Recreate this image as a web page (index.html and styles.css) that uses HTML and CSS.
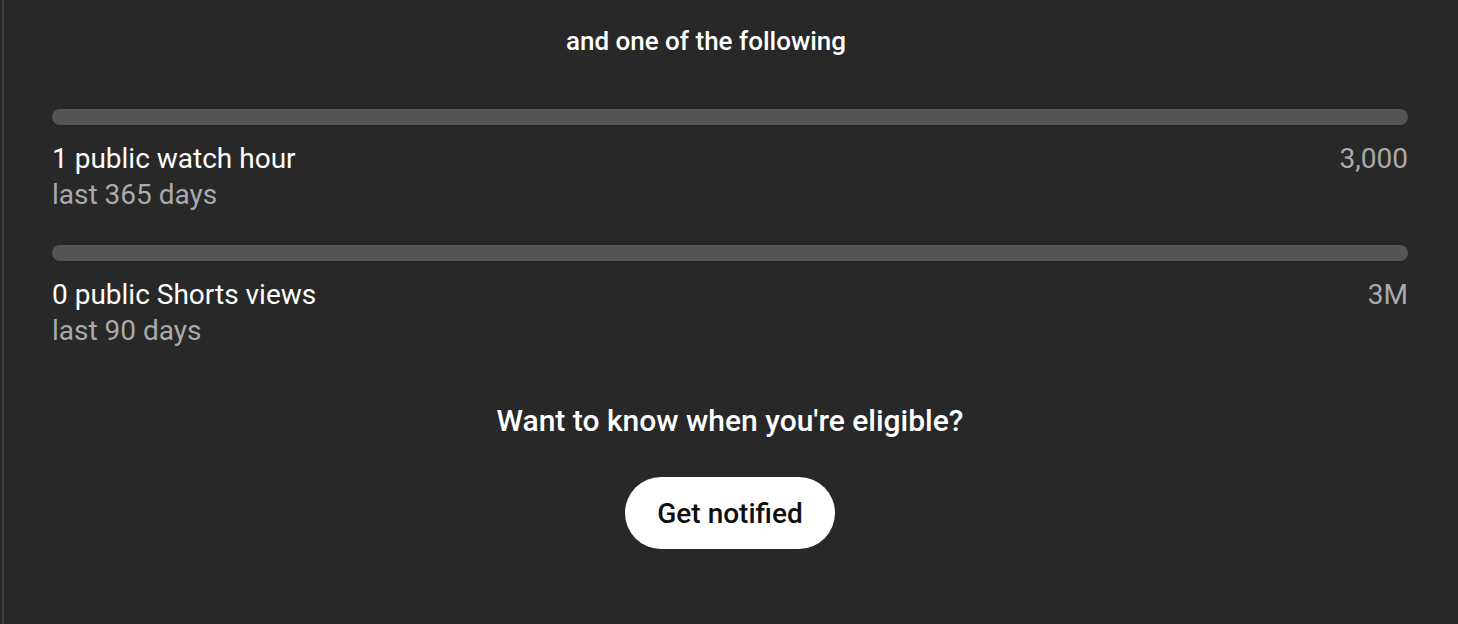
FILE: index.html
```html
<!DOCTYPE html>
<html>
<head>
  <meta charset="utf-8">
  <title>Eligibility</title>
  <link rel="stylesheet" href="styles.css">
</head>
<body>
  <div class="panel">
    <h2 class="heading">and one of the following</h2>

    <div class="goal first">
      <div class="bar"></div>
      <div class="row">
        <div>
          <div class="label">1 public watch hour</div>
          <div class="sub">last 365 days</div>
        </div>
        <div class="target">3,000</div>
      </div>
    </div>

    <div class="goal">
      <div class="bar"></div>
      <div class="row">
        <div>
          <div class="label">0 public Shorts views</div>
          <div class="sub">last 90 days</div>
        </div>
        <div class="target">3M</div>
      </div>
    </div>

    <div class="notify">
      <div class="question">Want to know when you're eligible?</div>
      <button class="button">Get notified</button>
    </div>
  </div>
</body>
</html>
```

FILE: styles.css
```css
body {margin: 0;
      background-color: #282828;
      font-family: Roboto, "Liberation Sans", sans-serif;
      color: #ffffff;}

.panel {margin-left: 2px;
        border-left: 2px solid #3b3b3b;
        padding: 0 50px 0 48px;
        height: 624px;
        box-sizing: border-box;}

.heading {margin: 0;
          padding-top: 24px;
          padding-right: 48px;
          font-size: 26px;
          font-weight: 500;
          line-height: 34px;
          text-align: center;}

.goal {margin-top: 32px;}

.goal.first {margin-top: 51px;}

.bar {height: 16px;
      border-radius: 8px;
      background-color: #555555;}

.row {display: flex;
      justify-content: space-between;
      margin-top: 16px;
      font-size: 28px;
      line-height: 36px;}

.sub {color: #aaaaaa;}

.target {color: #aaaaaa;}

.notify {display: flex;
         flex-direction: column;
         align-items: center;
         margin-top: 52px;}

.question {font-size: 30px;
           font-weight: 500;
           line-height: 40px;}

.button {margin-top: 36px;
         width: 210px;
         height: 72px;
         border: none;
         border-radius: 36px;
         background-color: #ffffff;
         color: #0f0f0f;
         font-family: Roboto, "Liberation Sans", sans-serif;
         font-size: 28px;
         font-weight: 500;}
```
